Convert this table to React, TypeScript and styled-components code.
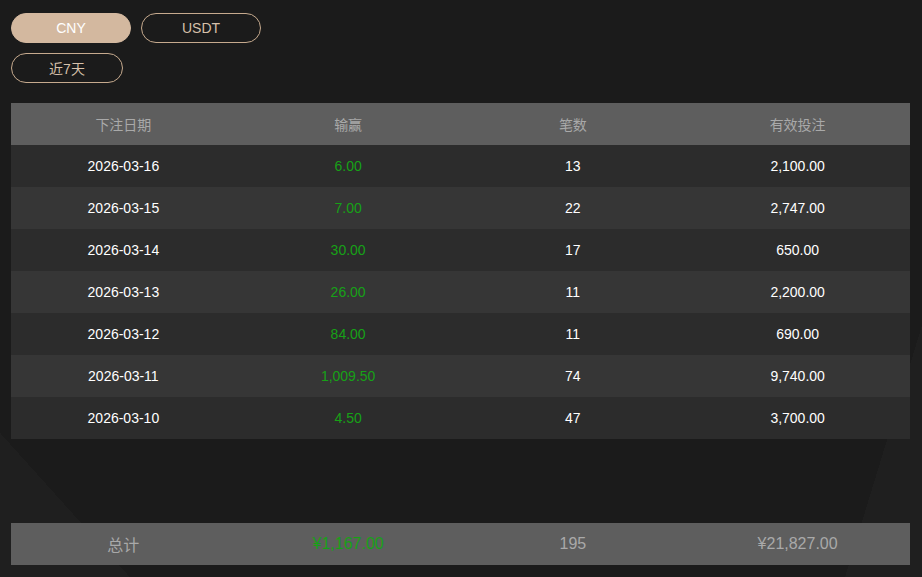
import React from 'react';
import styled, { createGlobalStyle } from 'styled-components';

const GlobalStyle = createGlobalStyle`
  html, body {
    margin: 0;
    padding: 0;
    background: #1c1c1c;
  }
  body {
    font-family: "Liberation Sans", Arial, "Noto Sans CJK SC", sans-serif;
  }
`;

const Page = styled.div`
  min-height: 100vh;
  box-sizing: border-box;
  padding: 13px 12px 12px 11px;
  display: flex;
  flex-direction: column;
  background:
    linear-gradient(48deg, #1f1f1f 0, #1f1f1f 9%, transparent 9%),
    linear-gradient(-73deg, #1f1f1f 0, #1f1f1f 7%, transparent 7%),
    #1b1b1b;
`;

const ButtonRow = styled.div`
  display: flex;
  gap: 10px;
  margin-bottom: 10px;
`;

const Pill = styled.button<{ $active?: boolean; $width?: number }>`
  width: ${p => p.$width ?? 120}px;
  height: 30px;
  border-radius: 15px;
  box-sizing: border-box;
  border: 1px solid ${p => (p.$active ? '#d3b89f' : '#c6aa8e')};
  background: ${p => (p.$active ? '#d3b89f' : 'transparent')};
  color: ${p => (p.$active ? '#ffffff' : '#d6c0aa')};
  font-family: inherit;
  font-size: 14px;
  padding: 0;
  cursor: pointer;
`;

const Table = styled.div`
  margin-top: 10px;
  display: flex;
  flex-direction: column;
`;

const Row = styled.div<{ $bg: string }>`
  display: grid;
  grid-template-columns: repeat(4, 1fr);
  height: 42px;
  align-items: center;
  background: ${p => p.$bg};
`;

const Cell = styled.div<{ $color?: string; $size?: number }>`
  text-align: center;
  font-size: ${p => p.$size ?? 14}px;
  color: ${p => p.$color ?? '#ffffff'};
`;

const Footer = styled(Row)`
  margin-top: auto;
`;

const GREEN = '#17a117';

const rows = [
  ['2026-03-16', '6.00', '13', '2,100.00'],
  ['2026-03-15', '7.00', '22', '2,747.00'],
  ['2026-03-14', '30.00', '17', '650.00'],
  ['2026-03-13', '26.00', '11', '2,200.00'],
  ['2026-03-12', '84.00', '11', '690.00'],
  ['2026-03-11', '1,009.50', '74', '9,740.00'],
  ['2026-03-10', '4.50', '47', '3,700.00'],
];

export default function App() {
  return (
    <>
      <GlobalStyle />
      <Page>
        <ButtonRow>
          <Pill $active>CNY</Pill>
          <Pill>USDT</Pill>
        </ButtonRow>
        <ButtonRow>
          <Pill $width={112}>近7天</Pill>
        </ButtonRow>
        <Table>
          <Row $bg="#5e5e5e">
            <Cell $color="#a9a9a9">下注日期</Cell>
            <Cell $color="#a9a9a9">输赢</Cell>
            <Cell $color="#a9a9a9">笔数</Cell>
            <Cell $color="#a9a9a9">有效投注</Cell>
          </Row>
          {rows.map((r, i) => (
            <Row key={r[0]} $bg={i % 2 === 0 ? '#2c2c2c' : '#363636'}>
              <Cell>{r[0]}</Cell>
              <Cell $color={GREEN}>{r[1]}</Cell>
              <Cell>{r[2]}</Cell>
              <Cell>{r[3]}</Cell>
            </Row>
          ))}
        </Table>
        <Footer $bg="#5e5e5e">
          <Cell $color="#a9a9a9" $size={16}>总计</Cell>
          <Cell $color={GREEN} $size={16}>¥1,167.00</Cell>
          <Cell $color="#a9a9a9" $size={16}>195</Cell>
          <Cell $color="#a9a9a9" $size={16}>¥21,827.00</Cell>
        </Footer>
      </Page>
    </>
  );
}
